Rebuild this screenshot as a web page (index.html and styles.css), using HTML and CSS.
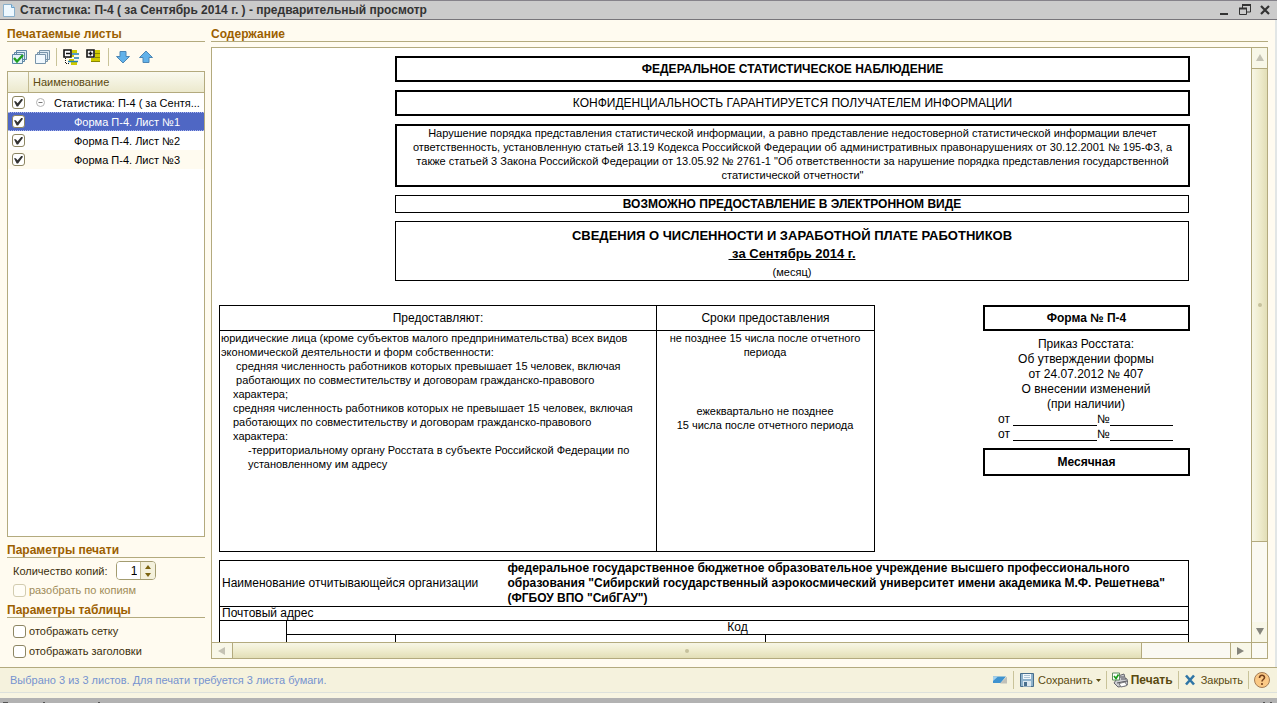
FILE: index.html
```html
<!DOCTYPE html>
<html lang="ru">
<head>
<meta charset="utf-8">
<title>Статистика: П-4 - предварительный просмотр</title>
<link rel="stylesheet" href="styles.css">
</head>
<body>
<div class="window">
  <header class="titlebar">
    <svg class="doc-icon" width="14" height="16" viewBox="0 0 14 16"><path d="M1.500 2.500h8l3 3v9h-11z" fill="#eef8ff" stroke="#8ab0cc"/><path d="M9.500 2.500v3h3" fill="#b8dcf4" stroke="#6da0c8"/></svg>
    <h1 class="title">Статистика: П-4 ( за Сентябрь 2014 г. ) - предварительный просмотр</h1>
    <div class="window-buttons">
      <button class="plain" aria-label="Свернуть"><svg width="12" height="12"><path d="M1 10h8" stroke="#333" stroke-width="2"/></svg></button>
      <button class="plain" aria-label="Восстановить"><svg width="12" height="12"><path d="M3.500 4V1h8v7H8M.500 4.500h7v6h-7z" fill="none" stroke="#333"/><path d="M3 1h9M0 4.500h8" stroke="#333" stroke-width="2"/></svg></button>
      <button class="plain" aria-label="Закрыть окно"><svg width="12" height="12"><path d="M2 2l8 8M10 2l-8 8" stroke="#333" stroke-width="2.200"/></svg></button>
    </div>
  </header>

  <main class="main">
    <section class="side">
      <h2 class="heading">Печатаемые листы</h2>
      <div class="toolbar">
        <button class="plain" aria-label="Выбрать все"><svg width="16" height="16"><path d="M5.500 1.500h10v9h-10zM3.500 3.500h10v9h-10z" fill="#dcebf5" stroke="#5f87a5"/><path d="M1.500 5.500h10v9h-10z" fill="#e4f2fb" stroke="#5f87a5"/><path d="M3 9l3 3.500L12 6" fill="none" stroke="#20a020" stroke-width="2.400"/></svg></button>
        <button class="plain" aria-label="Снять выбор"><svg width="16" height="16"><path d="M5.500 1.500h10v9h-10zM3.500 3.500h10v9h-10z" fill="#dce9f3" stroke="#7894aa"/><path d="M1.500 5.500h10v9h-10z" fill="#f0f8fe" stroke="#7894aa"/></svg></button>
        <span class="sep"></span>
        <button class="plain" aria-label="Свернуть группы"><svg width="16" height="16"><path d="M9 1h5v3H9zM9 6h2v2H9zM6 10h5v2H6zM8 13h6v3H8z" fill="#cfca00"/><path d="M9 5h7M11 9h5M5 12.500h10" stroke="#2080b0" stroke-width="1.500"/><path d="M2.500 9v5.500H6" fill="none" stroke="#111" stroke-dasharray="1 1"/><path d="M1 1h7v7H1z" fill="#fff" stroke="#111" stroke-width="1.600"/><path d="M3 4.500h4" stroke="#111" stroke-width="1.500"/></svg></button>
        <button class="plain" aria-label="Развернуть группы"><svg width="16" height="16"><path d="M9 1h5v3H9zM9 5h5v3H9zM5 9h9v3H5z" fill="#cfca00"/><path d="M9 4.500h5M9 8.500h5M5 12.500h9" stroke="#8a8800"/><path d="M1 1h7v7H1z" fill="#fff" stroke="#111" stroke-width="1.600"/><path d="M2.500 4.500h4M4.500 2.500v4" stroke="#111" stroke-width="1.500"/></svg></button>
        <span class="sep"></span>
        <button class="plain" aria-label="Переместить вниз"><svg width="16" height="16"><path d="M5 2.500h6v5h3.500L8 14 1.500 7.500H5z" fill="#62b2ea" stroke="#4d86b4"/></svg></button>
        <button class="plain" aria-label="Переместить вверх"><svg width="16" height="16"><path d="M5 13.500h6v-5h3.500L8 2 1.500 8.500H5z" fill="#62b2ea" stroke="#4d86b4"/></svg></button>
      </div>
      <div class="tree">
        <div class="tree-head"><span class="tree-mark"></span><span class="tree-name">Наименование</span></div>
        <label class="row root"><input type="checkbox" class="check" checked><svg class="expander" width="9" height="9"><circle cx="4.500" cy="4.500" r="4" fill="#fff" stroke="#b4b4b4"/><path d="M2.500 4.500h4" stroke="#777"/></svg><span class="root-name">Статистика: П-4 ( за Сентя...</span></label>
        <label class="row selected"><input type="checkbox" class="check" checked><span>Форма П-4. Лист №1</span></label>
        <label class="row"><input type="checkbox" class="check" checked><span>Форма П-4. Лист №2</span></label>
        <label class="row odd"><input type="checkbox" class="check" checked><span>Форма П-4. Лист №3</span></label>
      </div>
      <h2 class="heading">Параметры печати</h2>
      <div class="copies">
        <label for="copies">Количество копий:</label>
        <div class="spinner">
          <input id="copies" type="text" value="1">
          <div class="spin-buttons">
            <button class="plain" aria-label="Больше"><svg width="6" height="4"><path d="M0 4l3-4 3 4z" fill="#7c6410"/></svg></button>
            <button class="plain" aria-label="Меньше"><svg width="6" height="4"><path d="M0 0l3 4 3-4z" fill="#7c6410"/></svg></button>
          </div>
        </div>
      </div>
      <label class="option disabled"><input type="checkbox" class="check" disabled>разобрать по копиям</label>
      <h2 class="heading second">Параметры таблицы</h2>
      <label class="option"><input type="checkbox" class="check">отображать сетку</label>
      <label class="option"><input type="checkbox" class="check">отображать заголовки</label>
    </section>

    <section class="content">
      <h2 class="heading">Содержание</h2>
      <div class="viewer">
        <div class="sheet">
          <div class="notices">
            <div class="box thick bold">ФЕДЕРАЛЬНОЕ СТАТИСТИЧЕСКОЕ НАБЛЮДЕНИЕ</div>
            <div class="box thick">КОНФИДЕНЦИАЛЬНОСТЬ ГАРАНТИРУЕТСЯ ПОЛУЧАТЕЛЕМ ИНФОРМАЦИИ</div>
            <div class="box thick law">Нарушение порядка представления статистической информации, а равно представление недостоверной статистической информации влечет<br>ответственность, установленную статьей 13.19 Кодекса Российской Федерации об административных правонарушениях от 30.12.2001 № 195-ФЗ, а<br>также статьей 3 Закона Российской Федерации от 13.05.92 № 2761-1 "Об ответственности за нарушение порядка представления государственной<br>статистической отчетности"</div>
            <div class="box thin bold">ВОЗМОЖНО ПРЕДОСТАВЛЕНИЕ В ЭЛЕКТРОННОМ ВИДЕ</div>
            <div class="box subject">
              <strong>СВЕДЕНИЯ О ЧИСЛЕННОСТИ И ЗАРАБОТНОЙ ПЛАТЕ РАБОТНИКОВ</strong>
              <strong class="period">&nbsp;за Сентябрь 2014 г.</strong>
              <span class="small">(месяц)</span>
            </div>
          </div>
          <div class="middle">
            <table class="grid terms">
              <thead><tr><th class="who">Предоставляют:</th><th>Сроки предоставления</th></tr></thead>
              <tbody><tr>
                <td>
                  <p>юридические лица (кроме субъектов малого предпринимательства) всех видов<br>экономической деятельности и форм собственности:</p>
                  <p class="in1">&nbsp;средняя численность работников которых превышает 15 человек, включая<br>&nbsp;работающих по совместительству и договорам гражданско-правового<br>характера;<br>средняя численность работников которых не превышает 15 человек, включая<br>работающих по совместительству и договорам гражданско-правового<br>характера:</p>
                  <p class="in2">-территориальному органу Росстата в субъекте Российской Федерации по<br>установленному им адресу</p>
                </td>
                <td class="when"><p>не позднее 15 числа после отчетного<br>периода</p><p class="quarter">ежеквартально не позднее<br>15 числа после отчетного периода</p></td>
              </tr></tbody>
            </table>
            <div class="form-info">
              <div class="box thick bold">Форма № П-4</div>
              <p class="order">Приказ Росстата:<br>Об утверждении формы<br>от 24.07.2012 № 407<br>О внесении изменений<br>(при наличии)</p>
              <div class="blank">от <i class="line long"></i>№<i class="line"></i></div>
              <div class="blank">от <i class="line long"></i>№<i class="line"></i></div>
              <div class="box thick bold monthly">Месячная</div>
            </div>
          </div>
          <table class="grid org">
            <colgroup><col class="c1"><col class="c2"><col class="c3"><col class="c4"><col></colgroup>
            <tr class="name"><td colspan="3" class="open">Наименование отчитывающейся организации</td><td colspan="2" class="bold">федеральное государственное бюджетное образовательное учреждение высшего профессионального<br>образования "Сибирский государственный аэрокосмический университет имени академика М.Ф. Решетнева"<br>(ФГБОУ ВПО "СибГАУ")</td></tr>
            <tr><td colspan="5">Почтовый адрес</td></tr>
            <tr><td rowspan="2"></td><td colspan="4" class="code">Код</td></tr>
            <tr><td></td><td colspan="2"></td><td></td></tr>
          </table>
        </div>
        <div class="vbar">
          <button class="plain arrow" aria-label="Прокрутить вверх"><svg width="8" height="8"><path d="M0 7l4-7 4 7z" fill="#c4c2b4"/></svg></button>
          <div class="thumb"><span class="dot"></span></div>
          <div class="track"></div>
          <button class="plain arrow" aria-label="Прокрутить вниз"><svg width="8" height="8"><path d="M0 0l4 7 4-7z" fill="#85857c"/></svg></button>
        </div>
        <div class="hbar">
          <button class="plain arrow" aria-label="Прокрутить влево"><svg width="8" height="8"><path d="M7 0L0 4l7 4z" fill="#c4c2b4"/></svg></button>
          <div class="thumb"><span class="dot"></span></div>
          <div class="track"></div>
          <button class="plain arrow" aria-label="Прокрутить вправо"><svg width="8" height="8"><path d="M0 0l7 4-7 4z" fill="#85857c"/></svg></button>
        </div>
        <div class="corner"></div>
      </div>
    </section>
  </main>

  <footer class="footer">
    <p class="status">Выбрано 3 из 3 листов. Для печати требуется 3 листа бумаги.</p>
    <button class="plain" aria-label="Режим"><svg width="16" height="16"><path d="M1 4.500h13l-5.500 6.500H1z" fill="#3f93cf"/><path d="M1 4.500h5L1 9z" fill="#a4d2ee"/><path d="M8 11.500l6.500-6.500h.500v6.500z" fill="#c0c0b8"/></svg></button>
    <span class="sep"></span>
    <button class="plain command save"><svg width="16" height="16"><path d="M1.500 1.500h13v13h-13z" fill="#8eb2cc" stroke="#486e8c"/><path d="M4 2h8v5H4z" fill="#f2f8fc"/><path d="M5 3.500h6M5 5.500h6" stroke="#adc4d4"/><path d="M4 9h8v5.500H4z" fill="#dce8f0"/><path d="M5 10h3v4H5z" fill="#486e8c"/></svg>Сохранить<svg width="5" height="3"><path d="M0 0h5L2.500 3z" fill="#5a4a10"/></svg></button>
    <span class="sep"></span>
    <button class="plain command print"><svg width="16" height="16"><path d="M6 4l6-2 1 4 2 1 1 5-3 2-7 1-4-4 2-3z" fill="#cdcdd2" stroke="#66666c"/><path d="M8 5h4M9 7h5M5 11l10-2" stroke="#55555c"/><path d="M7 11.500l6-1.500 2 3.500-6 1.500z" fill="#fff" stroke="#77777c"/><path d="M.500 1h7v7h-7z" fill="#fff" stroke="#5f8c5f"/><path d="M2 4l2 2.500L6.500 2.500" fill="none" stroke="#18a018" stroke-width="1.700"/></svg>Печать</button>
    <span class="sep"></span>
    <button class="plain command close"><svg width="12" height="12"><path d="M2 1.500l8 9M10 1.500l-8 9" stroke="#2f75a6" stroke-width="2.600"/></svg>Закрыть</button>
    <span class="sep"></span>
    <button class="plain" aria-label="Справка"><svg width="16" height="16"><circle cx="8" cy="8" r="7.500" fill="#fbc985" stroke="#a47c54"/><path d="M5.500 6c0-3.500 5-3.500 5-.500 0 2-2.500 2-2.500 4M8 11v2" fill="none" stroke="#74401c" stroke-width="1.600"/></svg></button>
  </footer>
  <div class="under">
    <svg width="100" height="5"><path d="M3 4.500h5M43 4.500h2M98 4.500h2" stroke="#555"/></svg>
    <svg width="10" height="5"><path d="M0 4.500h2M7 4.500h2" stroke="#555"/></svg>
  </div>
</div>
</body>
</html>
```
FILE: styles.css
```css
* { box-sizing: border-box; }
body { margin: 0; font: 11px/14px "Liberation Sans", Arial, sans-serif; color: #3b2f0b; background: #fffbf0; overflow: hidden; }
h1, h2, p { margin: 0; font-size: inherit; }
svg { display: block; flex: none; }
.plain { display: flex; align-items: center; justify-content: center; padding: 0; border: 0; background: none; color: inherit; font: inherit; }
.bold { font-weight: bold; }
.window { display: flex; flex-direction: column; height: 100vh; }

.titlebar { display: flex; align-items: center; height: 20px; padding: 0 6px 0 2px; border-top: 1px solid #85828a; border-bottom: 1px solid #77757a; background: #cbcbcb; color: #333; }
.title { flex: 1; margin-left: 4px; font-size: 12px; }
.window-buttons { display: flex; gap: 8px; }

.main { flex: 1; min-height: 0; display: grid; grid-template-columns: 198px minmax(0, 1fr); gap: 6px; padding: 7px 7px 8px 7px; border-right: 2px solid #e2e6e6; }
.side, .content { display: flex; flex-direction: column; min-height: 0; }
.side { margin-bottom: -2px; }
.heading { height: 15px; border-bottom: 1px solid #b3aa7e; color: #9c5f00; font-size: 12px; white-space: nowrap; flex: none; }

.toolbar { display: flex; align-items: center; height: 29px; padding: 0 4px; gap: 7px; }
.sep { width: 1px; height: 18px; background: #c9c399; }
.toolbar .sep { margin: 0 -1px; }
.tree { flex: 1; border: 1px solid #b3aa7e; background: #fff; color: #000; }
.tree-head { display: flex; height: 21px; border-bottom: 1px solid #b3aa7e; background: linear-gradient(#fafaf0, #ece9cd); color: #5c4a10; line-height: 20px; }
.tree-mark { width: 21px; border-right: 1px solid #c3bb92; }
.tree-name { padding-left: 4px; }
.row { display: flex; align-items: center; height: 19px; padding-left: 4px; white-space: nowrap; border: 1px solid transparent; border-left: 0; border-right: 0; }
.row span { margin-left: 49px; }
.row .root-name { margin-left: 9px; }
.row .expander { margin-left: 11px; }
.row.odd { background: #fffbf0; }
.row.selected { background: #4f67c4; color: #fff; border-color: #aab6ee; border-style: dotted; }
.check { appearance: none; flex: none; display: flex; align-items: center; justify-content: center; width: 13px; height: 13px; margin: 0; border: 1px solid #8d8663; border-radius: 3px; background: #fff; }
.check:checked::before { content: ""; width: 9px; height: 8px; background: #333; clip-path: polygon(0 35%, 20% 35%, 40% 60%, 85% 0, 100% 15%, 45% 100%, 30% 100%); }
.check:disabled { border-color: #d2ccb0; background: #fffdf6; }
.side .tree + .heading { margin-top: 6px; }
.copies { display: flex; align-items: center; gap: 9px; height: 25px; padding-left: 6px; }
.spinner { display: flex; width: 40px; height: 19px; border: 1px solid #a39c70; border-radius: 4px; background: #fff; overflow: hidden; }
.spinner input { flex: 1; min-width: 0; padding: 0 3px; border: 0; font: 12px "Liberation Sans", Arial, sans-serif; text-align: right; }
.spin-buttons { display: flex; flex-direction: column; justify-content: center; gap: 4px; width: 15px; border-left: 1px solid #c3bb92; background: #f4f1dc; }
.option { display: flex; align-items: center; gap: 3px; height: 20px; padding-left: 6px; }
.option.disabled { height: 14px; color: #a08c58; }
.heading.second { margin-top: 6px; margin-bottom: 3px; }

.content .heading { margin-bottom: 5px; }
.viewer { flex: 1; min-height: 0; display: grid; grid-template: minmax(0, 1fr) 16px / minmax(0, 1fr) 16px; border: 1px solid #b3aa7e; background: #fff; }
.sheet { overflow: hidden; min-width: 0; padding: 8px 62px 0 7px; color: #000; font-size: 12px; line-height: 15px; white-space: nowrap; }
.notices { display: flex; flex-direction: column; gap: 8px; margin-left: 176px; text-align: center; }
.box { display: flex; flex-direction: column; align-items: center; justify-content: center; border: 1px solid #000; }
.thick { min-height: 26px; margin-right: -1px; border-width: 2px; }
.law { height: 63px; font-size: 11px; line-height: 14px; padding-bottom: 3px; }
.thin { height: 18px; }
.subject { height: 60px; font-size: 13px; line-height: 18px; padding-top: 6px; }
.period { text-decoration: underline; }
.small { font-size: 11px; }
.middle { display: flex; justify-content: space-between; align-items: flex-start; margin-top: 24px; }
.grid { border-collapse: collapse; table-layout: fixed; }
.grid th, .grid td { border: 1px solid #000; padding: 0 2px; font-weight: normal; text-align: left; vertical-align: top; }
.terms { width: 656px; height: 247px; font-size: 11px; line-height: 14px; }
.terms th { height: 25px; font-size: 12px; text-align: center; vertical-align: middle; }
.grid.terms td { padding-left: 1px; }
.who { width: 437px; }
.in1 { padding-left: 12px; }
.in2 { padding-left: 27px; }
.grid td.when { text-align: center; }
.quarter { margin-top: 45px; }
.form-info { width: 206px; text-align: center; }
.order { margin-top: 6px; }
.blank { display: flex; height: 15px; padding-left: 15px; }
.line { width: 63px; height: 14px; border-bottom: 1px solid #000; }
.line.long { width: 84px; margin-left: 3px; }
.monthly { margin-top: 6px; height: 28px; }
.org { width: 100%; margin-top: 8px; line-height: 13px; }
.c1 { width: 67px; }
.c2 { width: 109px; }
.c3 { width: 110px; }
.c4 { width: 260px; }
.org tr { height: 14px; }
.org .name { height: 46px; line-height: 15px; }
.grid .name td { vertical-align: middle; border-left: 0; }
.grid .name td.open { border-left: 1px solid #000; border-right: 0; }
.org td.bold { font-weight: bold; }
.grid .code { text-align: center; }

.vbar, .hbar { display: flex; background: #faf9f2; }
.vbar { flex-direction: column; border-left: 1px solid #b3aa7e; }
.hbar { border-top: 1px solid #b3aa7e; }
.arrow { flex: none; background: #f8f7e8; }
.vbar .arrow { height: 20px; }
.hbar .arrow { width: 20px; }
.thumb { display: flex; align-items: center; justify-content: center; }
.vbar .thumb { flex: 474; border: solid #b3aa7e; border-width: 1px 0; background: linear-gradient(90deg, #f7f6e6, #efecce 50%, #e2deb6); }
.hbar .thumb { flex: 912; border: solid #b3aa7e; border-width: 0 1px; background: linear-gradient(#f7f6e6, #efecce 50%, #e2deb6); }
.vbar .track { flex: 80; }
.hbar .track { flex: 88; border-right: 1px solid #b3aa7e; }
.dot { width: 4px; height: 4px; border-radius: 2px; background: #c6c19c; }
.corner { border: solid #b3aa7e; border-width: 1px 0 0 1px; background: #fbfaf4; }

.footer { display: flex; align-items: center; height: 26px; padding: 0 7px 0 10px; border-top: 1px solid #b3aa7e; border-bottom: 1px solid #dde1dc; background: #f5f2dd; color: #5a4a10; }
.status { flex: 1; color: #7592cf; }
.footer .sep { margin: 0 5px; }
.command { gap: 3px; }
.print { font-size: 12px; font-weight: bold; }
.close { gap: 5px; }
.under { display: flex; justify-content: space-between; height: 10px; padding-right: 4px; border-top: 5px solid #f8f5e2; background: #b2b2b2; }
```
